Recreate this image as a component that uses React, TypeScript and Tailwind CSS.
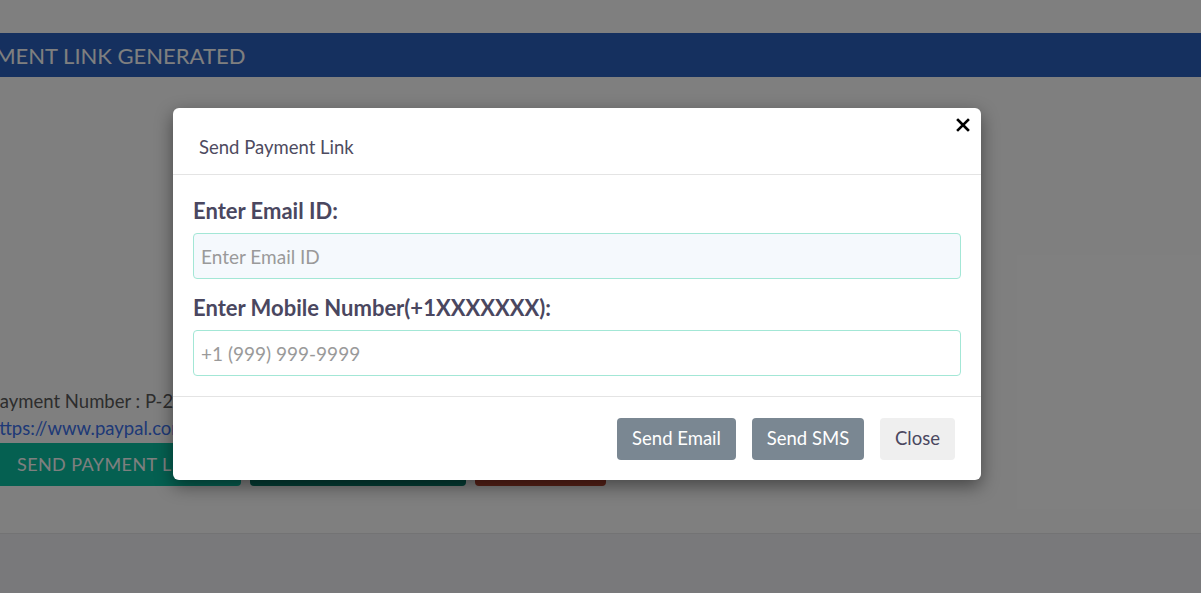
import React from "react";

const font = { fontFamily: "Lato, 'Noto Sans', sans-serif" };

export default function App() {
  return (
    <div className="relative h-[593px] w-[1201px] overflow-hidden bg-white" style={font}>
      {/* page behind the dialog */}
      <div className="flex h-full flex-col pt-[33px]">
        <div className="flex h-[44px] items-center overflow-hidden bg-[#2a60be]">
          <span className="-ml-[44px] whitespace-nowrap text-[22px] text-white">
            PAYMENT LINK GENERATED
          </span>
        </div>
        <div className="-ml-[11px] mt-[311px] flex flex-col">
          <div className="h-[27px] whitespace-nowrap text-[18.5px] leading-[27px] text-[#5a5a5a]">
            Payment Number : P-2024-0001
          </div>
          <div className="h-[27px] whitespace-nowrap text-[18.5px] leading-[27px] text-[#3c72ee]">
            https://www.paypal.com/invoice/p/#INV2-XXXX
          </div>
          <div className="mt-[1px] flex gap-[9px]">
            <button className="h-[43px] w-[252px] rounded-[4px] bg-[#0ac0a2] pl-[28px] text-left text-[18px] tracking-[0.4px] text-white">
              SEND PAYMENT LINK
            </button>
            <button className="h-[43px] w-[216px] rounded-[4px] bg-[#087e6c] text-[18px] text-white">
              COPY PAYMENT LINK
            </button>
            <button className="h-[43px] w-[131px] rounded-[4px] bg-[#b44430] text-[18px] text-white">
              CANCEL
            </button>
          </div>
        </div>
        <div className="mt-[47px] flex-1 border-t border-[#e6e6e8] bg-[#f2f2f6]" />
      </div>

      {/* backdrop */}
      <div className="absolute inset-0 bg-black/50" />

      {/* dialog */}
      <div className="absolute left-[173px] top-[108px] w-[808px] rounded-[6px] bg-white shadow-[0_6px_18px_rgba(0,0,0,0.45)]">
        <div className="relative h-[67px] border-b border-[#e4e4e4] pl-[26px] pt-[25px]">
          <span className="text-[18.5px] leading-[28px] text-[#4e4b60]">Send Payment Link</span>
          <button className="absolute right-[11px] top-[10px] leading-none">
            <svg width="14" height="14" viewBox="0 0 14 14">
              <path d="M2 2 L12 12 M12 2 L2 12" stroke="#000" strokeWidth="2.6" strokeLinecap="square" />
            </svg>
          </button>
        </div>
        <div className="flex flex-col px-[20px] pb-[20px] pt-[22px]">
          <label className="text-[22px] font-bold leading-[28px] text-[#4a4760]">Enter Email ID:</label>
          <input
            placeholder="Enter Email ID"
            className="mt-[8px] h-[46px] rounded-[4px] border border-[#a3e7d6] bg-[#f5f9fd] px-[7px] text-[19px] text-[#444] outline-none placeholder:text-[#9a9a9a]"
          />
          <label className="mt-[15px] text-[22px] font-bold leading-[28px] text-[#4a4760]">
            Enter Mobile Number(+1XXXXXXX):
          </label>
          <input
            placeholder="+1 (999) 999-9999"
            className="mt-[8px] h-[46px] rounded-[4px] border border-[#a3e7d6] bg-white px-[7px] text-[19px] text-[#444] outline-none placeholder:text-[#9a9a9a]"
          />
        </div>
        <div className="flex justify-end gap-[16px] border-t border-[#e4e4e4] pb-[20px] pr-[26px] pt-[21px]">
          <button className="h-[42px] w-[119px] rounded-[4px] bg-[#7a8792] text-[18.5px] text-white">Send Email</button>
          <button className="h-[42px] w-[112px] rounded-[4px] bg-[#7a8792] text-[18.5px] text-white">Send SMS</button>
          <button className="h-[42px] w-[75px] rounded-[4px] bg-[#efefef] text-[18.5px] text-[#4a4760]">Close</button>
        </div>
      </div>
    </div>
  );
}
